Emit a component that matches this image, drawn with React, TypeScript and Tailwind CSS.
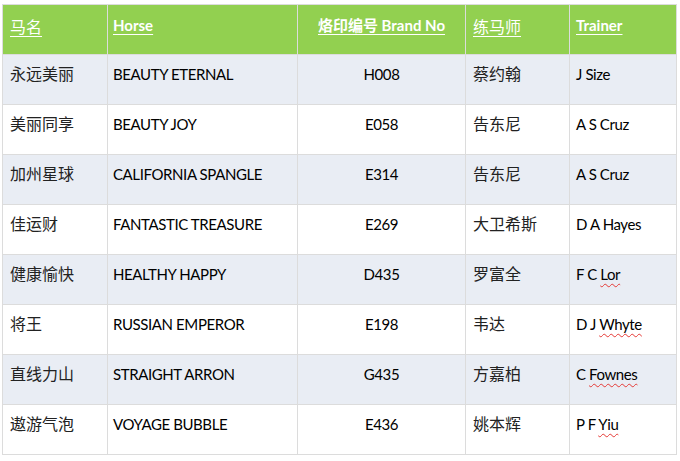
import React from 'react';

interface Row {
  cn: string;
  horse: string;
  brand: string;
  trainerCn: string;
  trainer: string;
  typo?: string;
}

const rows: Row[] = [
  { cn: '永远美丽', horse: 'BEAUTY ETERNAL', brand: 'H008', trainerCn: '蔡约翰', trainer: 'J Size' },
  { cn: '美丽同享', horse: 'BEAUTY JOY', brand: 'E058', trainerCn: '告东尼', trainer: 'A S Cruz' },
  { cn: '加州星球', horse: 'CALIFORNIA SPANGLE', brand: 'E314', trainerCn: '告东尼', trainer: 'A S Cruz' },
  { cn: '佳运财', horse: 'FANTASTIC TREASURE', brand: 'E269', trainerCn: '大卫希斯', trainer: 'D A Hayes' },
  { cn: '健康愉快', horse: 'HEALTHY HAPPY', brand: 'D435', trainerCn: '罗富全', trainer: 'F C ', typo: 'Lor' },
  { cn: '将王', horse: 'RUSSIAN EMPEROR', brand: 'E198', trainerCn: '韦达', trainer: 'D J ', typo: 'Whyte' },
  { cn: '直线力山', horse: 'STRAIGHT ARRON', brand: 'G435', trainerCn: '方嘉柏', trainer: 'C ', typo: 'Fownes' },
  { cn: '遨游气泡', horse: 'VOYAGE BUBBLE', brand: 'E436', trainerCn: '姚本辉', trainer: 'P F ', typo: 'Yiu' },
];

const font = "font-['Lato','Noto_Sans_CJK_SC',sans-serif]";
const cjk = "font-['Noto_Sans_CJK_SC',sans-serif]";

export default function App() {
  return (
    <div className="w-[680px] h-[461px] bg-white pt-[4px] pl-[2px]">
      <table className={`border-collapse table-fixed w-[674px] text-[15px] tracking-[-0.4px] text-black ${font}`}>
        <colgroup>
          <col className="w-[105px]" />
          <col className="w-[190px]" />
          <col className="w-[168px]" />
          <col className="w-[104px]" />
          <col className="w-[107px]" />
        </colgroup>
        <thead>
          <tr className="h-[50px] bg-[#92d050] text-white text-[15px] tracking-normal font-bold">
            <th className={`border border-[#dcdcdc] text-left align-top pt-[9px] pl-[7px] font-normal text-[16px] ${cjk}`}>
              <span className="underline underline-offset-[3px]">马名</span>
            </th>
            <th className="border border-[#dcdcdc] text-left align-top pt-[9px] pl-[5px]">
              <span className="underline underline-offset-[3px]">Horse</span>
            </th>
            <th className="border border-[#dcdcdc] text-center align-top pt-[9px]">
              <span className="underline underline-offset-[3px]">烙印编号 Brand No</span>
            </th>
            <th className={`border border-[#dcdcdc] text-left align-top pt-[9px] pl-[7px] font-normal text-[16px] ${cjk}`}>
              <span className="underline underline-offset-[3px]">练马师</span>
            </th>
            <th className="border border-[#dcdcdc] text-left align-top pt-[9px] pl-[6px]">
              <span className="underline underline-offset-[3px]">Trainer</span>
            </th>
          </tr>
        </thead>
        <tbody>
          {rows.map((r, i) => (
            <tr key={r.horse} className={`h-[50px] ${i % 2 === 0 ? 'bg-[#e9edf4]' : 'bg-white'}`}>
              <td className={`border border-[#dcdcdc] align-top pt-[6px] pl-[7px] text-[16px] tracking-normal text-[#222] ${cjk}`}>{r.cn}</td>
              <td className="border border-[#dcdcdc] align-top pt-[8px] pl-[5px]">{r.horse}</td>
              <td className="border border-[#dcdcdc] align-top pt-[8px] text-center">{r.brand}</td>
              <td className={`border border-[#dcdcdc] align-top pt-[6px] pl-[7px] text-[16px] tracking-normal text-[#222] ${cjk}`}>{r.trainerCn}</td>
              <td className="border border-[#dcdcdc] align-top pt-[8px] pl-[6px]">
                {r.trainer}
                {r.typo && (
                  <span className="underline decoration-wavy decoration-[#e53935] decoration-1 underline-offset-[3px]">{r.typo}</span>
                )}
              </td>
            </tr>
          ))}
        </tbody>
      </table>
    </div>
  );
}
